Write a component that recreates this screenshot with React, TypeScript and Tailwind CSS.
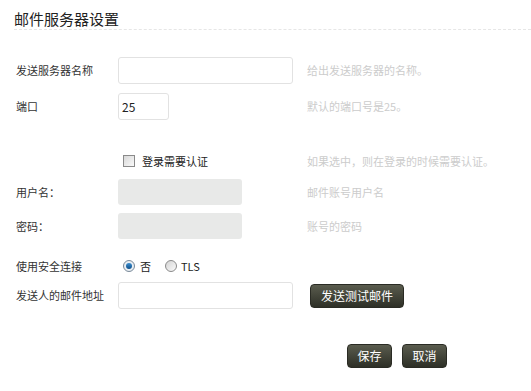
const font = { fontFamily: '"Noto Sans CJK SC", "DejaVu Sans", sans-serif' };

const Row = ({ label, hint, children, className = '' }: { label?: string; hint?: string; children: React.ReactNode; className?: string }) => (
  <div className={`flex items-center ${className}`}>
    <div className="w-[102px] shrink-0 text-[11px] text-[#333]">{label}</div>
    <div className="w-[189px] shrink-0 flex items-center">{children}</div>
    <div className="text-[11px] text-[#cccccc]">{hint}</div>
  </div>
);

const Btn = ({ children, className = '' }: { children: React.ReactNode; className?: string }) => (
  <button className={`h-[24px] shrink-0 rounded-[4px] bg-gradient-to-b from-[#5a5c4e] to-[#2e3027] text-white text-[12px] leading-none border border-[#2a2b24] ${className}`}>
    {children}
  </button>
);

export default function App() {
  return (
    <div className="w-[531px] h-[391px] bg-white overflow-hidden" style={font}>
      {/* Title */}
      <div className="ml-[14px] pt-[9px] h-[30px] border-b border-dashed border-[#e6e6e6] text-[15px] leading-[20px] text-[#222]">
        邮件服务器设置
      </div>

      <div className="pl-[16px]">
        <Row label="发送服务器名称" hint="给出发送服务器的名称。" className="mt-[27px]">
          <input className="w-[175px] shrink-0 h-[27px] border border-[#e2e2e2] rounded-[3px] outline-none px-[3px] text-[12px]" />
        </Row>
        <Row label="端口" hint="默认的端口号是25。" className="mt-[9px]">
          <input defaultValue="25" className="w-[51px] shrink-0 h-[27px] border border-[#e2e2e2] rounded-[3px] outline-none px-[3px] text-[12px] text-[#222]" />
        </Row>

        <Row hint="如果选中，则在登录的时候需要认证。" className="mt-[33px] h-[16px]">
          <span className="ml-[5px] w-[12px] h-[12px] border border-[#8a8a8a] bg-gradient-to-br from-[#d8d8d8] to-[#fafafa]" />
          <span className="ml-[7px] text-[11px] text-[#222]">登录需要认证</span>
        </Row>

        <Row label="用户名：" hint="邮件账号用户名" className="mt-[10px]">
          <div className="w-[124px] h-[26px] rounded-[3px] bg-[#e8e9e8]" />
        </Row>
        <Row label="密码：" hint="账号的密码" className="mt-[8px]">
          <div className="w-[124px] h-[26px] rounded-[3px] bg-[#e8e9e8]" />
        </Row>

        <Row label="使用安全连接" className="mt-[19px] h-[16px]">
          <span className="ml-[5px] w-[12px] h-[12px] rounded-full border border-[#7a8a99] bg-[#e9eef3] flex items-center justify-center">
            <span className="w-[6px] h-[6px] rounded-full bg-gradient-to-b from-[#3d8fd0] to-[#0b4f8a]" />
          </span>
          <span className="ml-[5px] text-[11px] text-[#222]">否</span>
          <span className="ml-[14px] w-[12px] h-[12px] rounded-full border border-[#8a8a8a] bg-gradient-to-br from-[#d4d4d4] to-[#fafafa]" />
          <span className="ml-[4px] text-[11px] text-[#222]">TLS</span>
        </Row>

        <Row label="发送人的邮件地址" className="mt-[8px]">
          <input className="w-[175px] shrink-0 h-[27px] border border-[#e2e2e2] rounded-[3px] outline-none px-[3px] text-[12px]" />
          <Btn className="ml-[17px] w-[94px]">发送测试邮件</Btn>
        </Row>
      </div>

      <div className="flex mt-[35px] pl-[347px] gap-[10px]">
        <Btn className="w-[45px]">保存</Btn>
        <Btn className="w-[45px]">取消</Btn>
      </div>
    </div>
  );
}
